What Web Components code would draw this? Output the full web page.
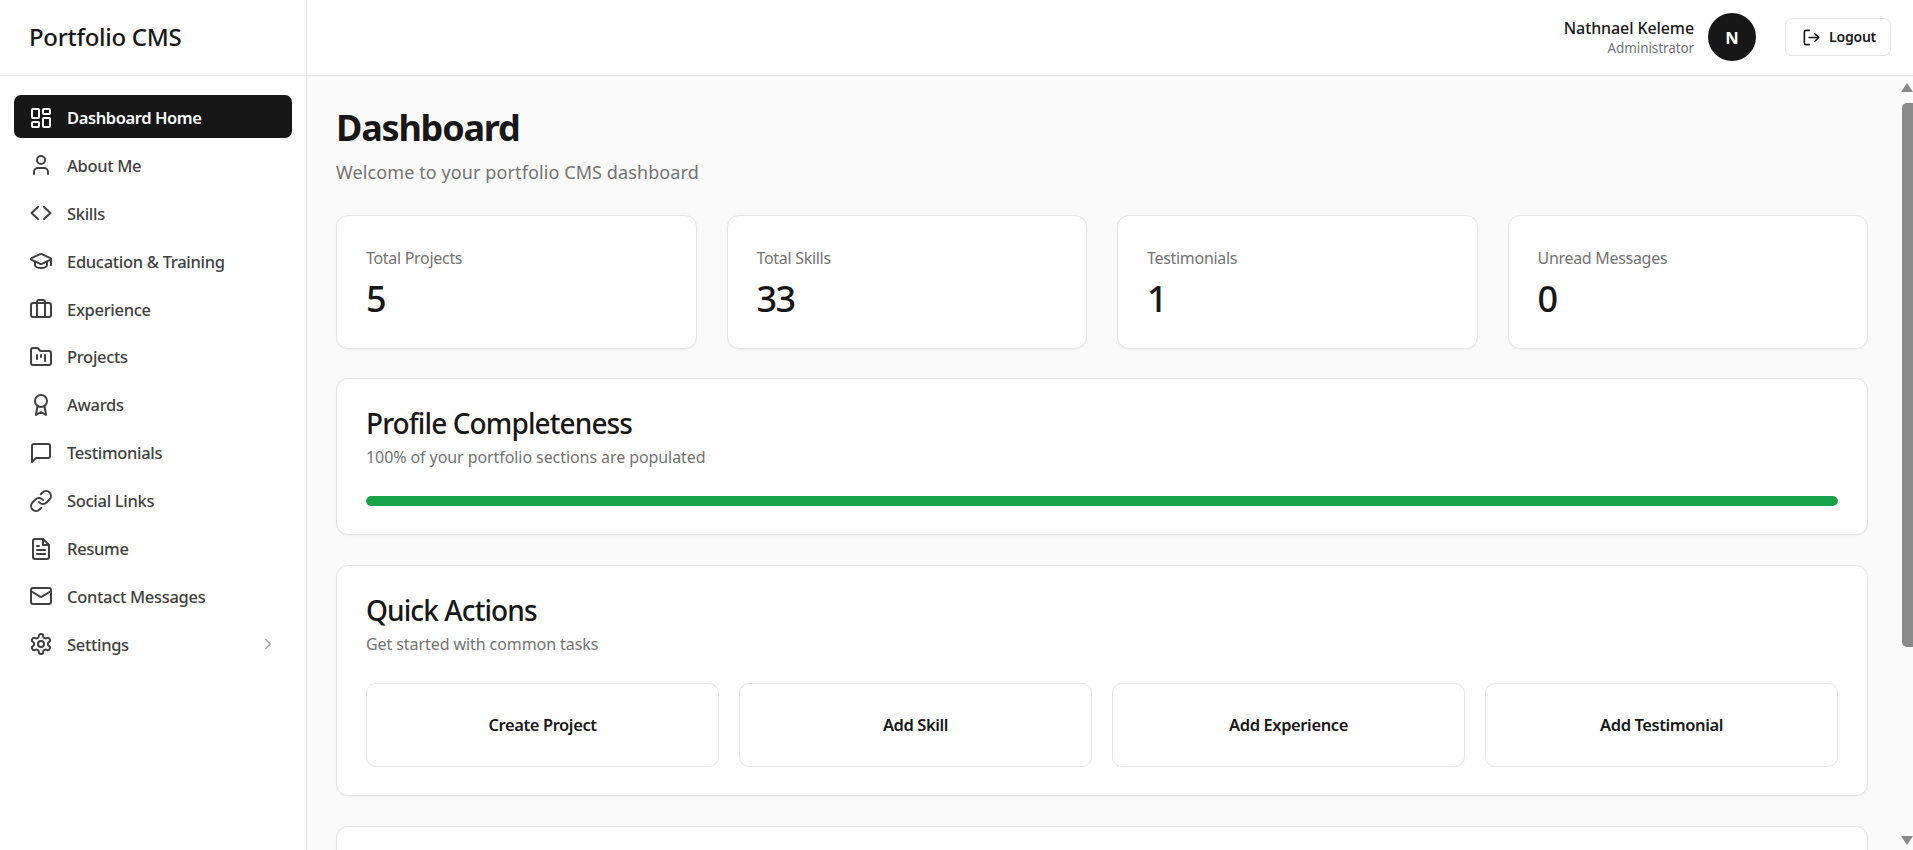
<!DOCTYPE html>
<html lang="en">
<head>
<meta charset="utf-8">
<title>Portfolio CMS</title>
<style>
  html, body { margin: 0; height: 100%; overflow: hidden; }
  body { font-family: "Noto Sans", "Open Sans", sans-serif; color: #171717; background: #fafafa; }
</style>
</head>
<body>
<cms-app>
  <cms-sidebar slot="sidebar" title="Portfolio CMS">
    <cms-nav-item icon="dashboard" active>Dashboard Home</cms-nav-item>
    <cms-nav-item icon="user">About Me</cms-nav-item>
    <cms-nav-item icon="code">Skills</cms-nav-item>
    <cms-nav-item icon="school">Education &amp; Training</cms-nav-item>
    <cms-nav-item icon="briefcase">Experience</cms-nav-item>
    <cms-nav-item icon="folder">Projects</cms-nav-item>
    <cms-nav-item icon="award">Awards</cms-nav-item>
    <cms-nav-item icon="message">Testimonials</cms-nav-item>
    <cms-nav-item icon="link">Social Links</cms-nav-item>
    <cms-nav-item icon="file">Resume</cms-nav-item>
    <cms-nav-item icon="mail">Contact Messages</cms-nav-item>
    <cms-nav-item icon="settings" chevron>Settings</cms-nav-item>
  </cms-sidebar>
  <cms-topbar slot="topbar" name="Nathnael Keleme" role="Administrator"></cms-topbar>

  <cms-page-head heading="Dashboard" sub="Welcome to your portfolio CMS dashboard"></cms-page-head>
  <cms-stat-row>
    <cms-stat label="Total Projects" value="5"></cms-stat>
    <cms-stat label="Total Skills" value="33"></cms-stat>
    <cms-stat label="Testimonials" value="1"></cms-stat>
    <cms-stat label="Unread Messages" value="0"></cms-stat>
  </cms-stat-row>
  <cms-panel heading="Profile Completeness" sub="100% of your portfolio sections are populated" class="profile">
    <cms-progress value="100"></cms-progress>
  </cms-panel>
  <cms-panel heading="Quick Actions" sub="Get started with common tasks" class="actions">
    <cms-action-grid>
      <cms-action>Create Project</cms-action>
      <cms-action>Add Skill</cms-action>
      <cms-action>Add Experience</cms-action>
      <cms-action>Add Testimonial</cms-action>
    </cms-action-grid>
  </cms-panel>
  <cms-panel class="recent"></cms-panel>
</cms-app>

<script>
const ICONS = {
  dashboard: '<rect x="3" y="3" width="7" height="9" rx="1"/><rect x="14" y="3" width="7" height="5" rx="1"/><rect x="14" y="12" width="7" height="9" rx="1"/><rect x="3" y="16" width="7" height="5" rx="1"/>',
  user: '<path d="M19 21v-2a4 4 0 0 0-4-4H9a4 4 0 0 0-4 4v2"/><circle cx="12" cy="7" r="4"/>',
  code: '<path d="M9 6l-6.500 6 6.500 6"/><path d="M15 6l6.500 6-6.500 6"/>',
  school: '<path d="M21.420 10.922a1 1 0 0 0-.019-1.838L12.830 5.180a2 2 0 0 0-1.660 0L2.600 9.080a1 1 0 0 0 0 1.832l8.570 3.908a2 2 0 0 0 1.660 0z"/><path d="M22 10v6"/><path d="M6 12.500V16a6 3 0 0 0 12 0v-3.500"/>',
  briefcase: '<rect x="2" y="6" width="20" height="14" rx="2"/><path d="M8 20V5a2 2 0 0 1 2-2h4a2 2 0 0 1 2 2v15"/>',
  folder: '<path d="M4 20h16a2 2 0 0 0 2-2V8a2 2 0 0 0-2-2h-7.930a2 2 0 0 1-1.660-.900l-.820-1.200A2 2 0 0 0 7.930 3H4a2 2 0 0 0-2 2v13c0 1.100.900 2 2 2Z"/><path d="M8 10v4"/><path d="M12 10v2"/><path d="M16 10v6"/>',
  award: '<circle cx="12" cy="8" r="6"/><path d="M15.477 12.890 17 22l-5-3-5 3 1.523-9.110"/>',
  message: '<path d="M21 15a2 2 0 0 1-2 2H7l-4 4V5a2 2 0 0 1 2-2h14a2 2 0 0 1 2 2z"/>',
  link: '<path d="M10 13a5 5 0 0 0 7.540.540l3-3a5 5 0 0 0-7.070-7.070l-1.720 1.710"/><path d="M14 11a5 5 0 0 0-7.540-.540l-3 3a5 5 0 0 0 7.070 7.070l1.710-1.710"/>',
  file: '<path d="M14 2H6a2 2 0 0 0-2 2v16a2 2 0 0 0 2 2h12a2 2 0 0 0 2-2V8z"/><path d="M14 2v6h6"/><path d="M16 13H8"/><path d="M16 17H8"/><path d="M10 9H8"/>',
  mail: '<rect x="2" y="4" width="20" height="16" rx="2"/><path d="M22 7l-8.970 5.700a1.940 1.940 0 0 1-2.060 0L2 7"/>',
  settings: '<path d="M12.220 2h-.440a2 2 0 0 0-2 2v.180a2 2 0 0 1-1 1.730l-.430.250a2 2 0 0 1-2 0l-.150-.080a2 2 0 0 0-2.730.730l-.220.380a2 2 0 0 0 .730 2.730l.150.100a2 2 0 0 1 1 1.720v.510a2 2 0 0 1-1 1.740l-.150.090a2 2 0 0 0-.730 2.730l.220.380a2 2 0 0 0 2.730.730l.150-.080a2 2 0 0 1 2 0l.430.250a2 2 0 0 1 1 1.730V20a2 2 0 0 0 2 2h.440a2 2 0 0 0 2-2v-.180a2 2 0 0 1 1-1.730l.430-.250a2 2 0 0 1 2 0l.150.080a2 2 0 0 0 2.730-.730l.220-.390a2 2 0 0 0-.730-2.730l-.150-.080a2 2 0 0 1-1-1.740v-.500a2 2 0 0 1 1-1.740l.150-.090a2 2 0 0 0 .730-2.730l-.220-.380a2 2 0 0 0-2.730-.730l-.150.080a2 2 0 0 1-2 0l-.430-.250a2 2 0 0 1-1-1.730V4a2 2 0 0 0-2-2z"/><circle cx="12" cy="12" r="3"/>',
  logout: '<path d="M9 21H5a2 2 0 0 1-2-2V5a2 2 0 0 1 2-2h4"/><path d="M16 17l5-5-5-5"/><path d="M21 12H9"/>',
  chevron: '<path d="M9 18l6-6-6-6"/>',
};

const svgIcon = (name, size = 24) =>
  `<svg width="${size}" height="${size}" viewBox="0 0 24 24" fill="none" stroke="currentColor" stroke-width="2" stroke-linecap="round" stroke-linejoin="round">${ICONS[name]}</svg>`;

// small helper, every element below is the same shape: styles + markup in an open root
class CmsElement extends HTMLElement {
  constructor() {
    super();
    this._shadowRoot = this.attachShadow({ mode: 'open' });
  }

  connectedCallback() {
    this._shadowRoot.innerHTML = `<style>${this.styles()}</style>${this.markup()}`;
  }

  attr(name) {
    return this.getAttribute(name) || '';
  }
}

class CmsApp extends CmsElement {
  styles() {
    return `
      :host { display: grid; grid-template-columns: 307px 1fr; grid-template-rows: 76px 1fr; height: 100vh; overflow: hidden; }
      .side { grid-row: 1 / 3; display: flex; min-height: 0; }
      .top { display: flex; }
      .body { display: flex; min-height: 0; min-width: 0; }
      .scroll { flex: 1; min-width: 0; overflow: hidden; padding: 30px 30px 0 29px; display: flex; flex-direction: column; gap: 29.700px; box-sizing: border-box; }
    `;
  }

  markup() {
    return `
      <div class="side"><slot name="sidebar"></slot></div>
      <div class="top"><slot name="topbar"></slot></div>
      <div class="body">
        <div class="scroll"><slot></slot></div>
        <cms-scrollrail></cms-scrollrail>
      </div>
    `;
  }
}

class CmsSidebar extends CmsElement {
  styles() {
    return `
      :host { display: flex; flex-direction: column; flex: 1; background: #fff; border-right: 1px solid #e5e5e5; box-sizing: border-box; }
      .brand { height: 76px; box-sizing: border-box; border-bottom: 1px solid #e5e5e5; padding: 0 29px 3px; display: flex; align-items: center;
        font-size: 24px; font-weight: 500; letter-spacing: -0.3px; color: #171717; }
      nav { display: flex; flex-direction: column; gap: 4.900px; padding: 19px 14px; }
    `;
  }

  markup() {
    return `<div class="brand">${this.attr('title')}</div><nav><slot></slot></nav>`;
  }
}

class CmsNavItem extends CmsElement {
  styles() {
    return `
      :host { display: flex; align-items: center; height: 43px; box-sizing: border-box; padding: 2px 15px 0; gap: 14px; border-radius: 7px;
        font-size: 16.500px; font-weight: 500; letter-spacing: -0.3px; color: #404040; }
      :host([active]) { background: #171717; color: #fff; font-weight: 600; letter-spacing: -0.4px; }
      svg { flex: none; display: block; }
      .label { flex: 1; }
      .chev { color: #a3a3a3; flex: none; display: flex; }
    `;
  }

  markup() {
    const chev = this.hasAttribute('chevron') ? `<span class="chev">${svgIcon('chevron', 18)}</span>` : '';
    return `${svgIcon(this.attr('icon'))}<span class="label"><slot></slot></span>${chev}`;
  }
}

class CmsTopbar extends CmsElement {
  styles() {
    return `
      :host { flex: 1; display: flex; align-items: center; justify-content: flex-end; height: 76px; box-sizing: border-box; background: #fff;
        border-bottom: 1px solid #e5e5e5; padding: 0 22px 1px 0; }
      .who { display: flex; flex-direction: column; align-items: flex-end; margin-right: 14px; }
      .name { font-size: 16px; font-weight: 500; letter-spacing: -0.1px; line-height: 22px; color: #171717; }
      .role { font-size: 13.500px; letter-spacing: -0.1px; line-height: 19px; color: #737373; }
      .avatar { width: 48px; height: 48px; border-radius: 50%; background: #171717; color: #fff; display: flex; align-items: center; justify-content: center;
        font-size: 16.500px; font-weight: 700; margin-right: 29px; }
      button { display: flex; align-items: center; gap: 8px; height: 38px; width: 106px; box-sizing: border-box; padding: 0 0 0 16px; background: #fff;
        border: 1px solid #e5e5e5; border-radius: 7px; font: inherit; font-size: 14px; font-weight: 600; letter-spacing: -0.2px; color: #171717; }
      button span { padding-bottom: 2px; }
      svg { display: block; flex: none; }
    `;
  }

  markup() {
    return `
      <div class="who"><span class="name">${this.attr('name')}</span><span class="role">${this.attr('role')}</span></div>
      <div class="avatar">N</div>
      <button>${svgIcon('logout', 19)}<span>Logout</span></button>
    `;
  }
}

class CmsPageHead extends CmsElement {
  styles() {
    return `
      :host { display: block; margin-bottom: 0; }
      h1 { margin: 0; font-size: 36px; line-height: 44px; font-weight: 700; letter-spacing: -1.200px; color: #171717; }
      p { margin: 9px 0 0; font-size: 18px; line-height: 26px; letter-spacing: 0.100px; color: #737373; }
    `;
  }

  markup() {
    return `<h1>${this.attr('heading')}</h1><p>${this.attr('sub')}</p>`;
  }
}

class CmsStatRow extends CmsElement {
  styles() {
    return ':host { display: grid; grid-template-columns: repeat(4, 1fr); gap: 30px; }';
  }

  markup() {
    return '<slot></slot>';
  }
}

class CmsStat extends CmsElement {
  styles() {
    return `
      :host { display: block; height: 134px; box-sizing: border-box; background: #fff; border: 1px solid #e5e5e5; border-radius: 12px;
        padding: 31px 29px 0; box-shadow: 0 1px 2px rgba(0,0,0,.04); }
      .label { font-size: 16px; line-height: 22px; letter-spacing: -0.3px; color: #737373; }
      .value { font-size: 36px; line-height: 44px; font-weight: 500; letter-spacing: -1.500px; color: #171717; margin-top: 8px; }
    `;
  }

  markup() {
    return `<div class="label">${this.attr('label')}</div><div class="value">${this.attr('value')}</div>`;
  }
}

class CmsPanel extends CmsElement {
  styles() {
    return `
      :host { display: block; box-sizing: border-box; background: #fff; border: 1px solid #e5e5e5; border-radius: 12px; padding: 26px 29px 28.500px;
        box-shadow: 0 1px 2px rgba(0,0,0,.04); flex: none; }
      :host(.recent) { height: 60px; }
      h2 { margin: 0; font-size: 28px; line-height: 36px; font-weight: 500; letter-spacing: -0.900px; color: #171717; }
      p { margin: 5px 0 27.500px; font-size: 16px; line-height: 22px; letter-spacing: -0.080px; color: #737373; }
    `;
  }

  markup() {
    const head = this.hasAttribute('heading') ? `<h2>${this.attr('heading')}</h2><p>${this.attr('sub')}</p>` : '';
    return `${head}<slot></slot>`;
  }
}

class CmsProgress extends CmsElement {
  styles() {
    return `
      :host { display: block; height: 10px; border-radius: 5px; background: #e5e5e5; overflow: hidden; }
      .fill { height: 100%; background: #16a34a; border-radius: 5px; }
    `;
  }

  markup() {
    return `<div class="fill" style="width:${this.attr('value')}%"></div>`;
  }
}

class CmsActionGrid extends CmsElement {
  styles() {
    return ':host { display: grid; grid-template-columns: repeat(4, 1fr); gap: 20px; }';
  }

  markup() {
    return '<slot></slot>';
  }
}

class CmsAction extends CmsElement {
  styles() {
    return `
      :host { display: flex; align-items: center; justify-content: center; height: 84px; box-sizing: border-box; background: #fff;
        border: 1px solid #e5e5e5; border-radius: 10px; font-size: 16.500px; font-weight: 600; letter-spacing: -0.4px; color: #171717; }
    `;
  }

  markup() {
    return '<slot></slot>';
  }
}

class CmsScrollrail extends CmsElement {
  styles() {
    return `
      :host { flex: none; width: 15px; display: flex; flex-direction: column; align-items: flex-end; box-sizing: border-box; padding: 7px 0 5px; }
      .up, .down { width: 0; height: 0; border-left: 6.500px solid transparent; border-right: 6.500px solid transparent; }
      .up { border-bottom: 9px solid #8a8a8a; }
      .down { border-top: 9px solid #8a8a8a; }
      .thumb { width: 11px; height: 544px; margin-top: 11px; border-radius: 5px 0 0 5px; background: #8a8a8a; }
      .gap { flex: 1; }
    `;
  }

  markup() {
    return '<div class="up"></div><div class="thumb"></div><div class="gap"></div><div class="down"></div>';
  }
}

customElements.define('cms-app', CmsApp);
customElements.define('cms-sidebar', CmsSidebar);
customElements.define('cms-nav-item', CmsNavItem);
customElements.define('cms-topbar', CmsTopbar);
customElements.define('cms-page-head', CmsPageHead);
customElements.define('cms-stat-row', CmsStatRow);
customElements.define('cms-stat', CmsStat);
customElements.define('cms-panel', CmsPanel);
customElements.define('cms-progress', CmsProgress);
customElements.define('cms-action-grid', CmsActionGrid);
customElements.define('cms-action', CmsAction);
customElements.define('cms-scrollrail', CmsScrollrail);
</script>
</body>
</html>
